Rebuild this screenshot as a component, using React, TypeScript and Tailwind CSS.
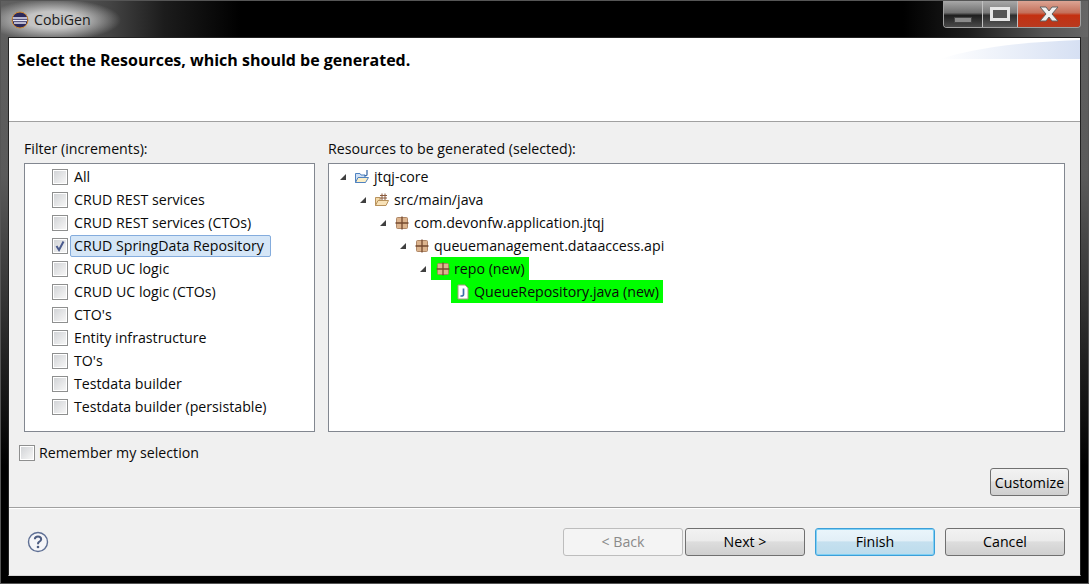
import React from 'react';

const font = { fontFamily: '"Open Sans", "Noto Sans", sans-serif' };

const filters = [
  'All',
  'CRUD REST services',
  'CRUD REST services (CTOs)',
  'CRUD SpringData Repository',
  'CRUD UC logic',
  'CRUD UC logic (CTOs)',
  "CTO's",
  'Entity infrastructure',
  "TO's",
  'Testdata builder',
  'Testdata builder (persistable)',
];

const Check: React.FC<{ checked?: boolean }> = ({ checked }) => (
  <span className="relative flex h-[16px] w-[16px] shrink-0 items-center justify-center border border-[#8e8f8f] bg-white">
    <span className="h-[12px] w-[12px] bg-gradient-to-br from-[#d2d4d7] to-[#f6f6f6]" />
    {checked && (
      <svg viewBox="0 0 16 16" className="absolute -left-px -top-px h-[16px] w-[16px]">
        <path d="M4.5 8 L7 12 L11.5 3.5" fill="none" stroke="#4a5a8c" strokeWidth="2" />
      </svg>
    )}
  </span>
);

const PackageIcon = () => (
  <svg viewBox="0 0 14 14" className="h-[14px] w-[14px] shrink-0">
    <rect x="1.5" y="1.5" width="11" height="11" rx="1" fill="#dcb48e" stroke="#a87e5c" strokeWidth="0.9" />
    <path d="M0.5 7H13.5M7 0.5V13.5" stroke="#74492f" strokeWidth="1.3" fill="none" />
  </svg>
);

const Arrow = () => (
  <svg viewBox="0 0 8 8" className="h-2 w-2 shrink-0">
    <path d="M7 1V7H1Z" fill="#404040" />
  </svg>
);

const ProjectIcon = () => (
  <svg viewBox="0 0 16 16" className="h-4 w-4 shrink-0">
    <path d="M1.5 4.5H6L7 6H11V13.5H1.5Z" fill="#cfe0f5" stroke="#4f82c0" />
    <path d="M1.5 13.5L4 8.5H14.5L11.5 13.5Z" fill="#fbeec6" stroke="#4f82c0" />
    <path d="M13 1V5.5Q13 7 10.5 6.5" fill="none" stroke="#3f6ea8" strokeWidth="1.3" />
  </svg>
);

const SourceIcon = () => (
  <svg viewBox="0 0 16 16" className="h-4 w-4 shrink-0">
    <path d="M1.5 5.5H6V13.5H1.5Z" fill="#f3d9a8" stroke="#b8925c" />
    <path d="M1.5 13.5L4 8.5H14.5L12 13.5Z" fill="#f8e2b8" stroke="#b8925c" />
    <path d="M6 3.5H13M6 6H13M8 1.5V8M11 1.5V8" stroke="#8a5a3c" fill="none" />
  </svg>
);

const JavaFileIcon = () => (
  <svg viewBox="0 0 14 16" className="h-4 w-[14px] shrink-0">
    <path d="M2 1H9L12 4V15H2Z" fill="#ffffff" stroke="#a89880" />
    <path d="M7.5 4.5V10.5Q7.5 12.5 4.5 11.8" fill="none" stroke="#3f6ea8" strokeWidth="1.7" />
  </svg>
);

const TreeRow: React.FC<{
  indent: string;
  gap: string;
  icon: React.ReactNode;
  label: string;
}> = ({ indent, gap, icon, label }) => (
  <div className={`flex h-[23px] items-center ${indent}`}>
    <Arrow />
    <span className={`flex h-[23px] items-center ${gap}`}>
      {icon}
      <span>{label}</span>
    </span>
  </div>
);

const WizardButton: React.FC<{ label: string; kind?: 'normal' | 'disabled' | 'focus'; className?: string }> = ({
  label,
  kind = 'normal',
  className = '',
}) => {
  const look =
    kind === 'disabled'
      ? 'border-[#bdbdbd] bg-[#f4f4f4] text-[#8a8a8a]'
      : kind === 'focus'
        ? 'border-[#3c9fd8] bg-[linear-gradient(#eaf5fb_0%,#e2eff7_45%,#c5e0ef_50%,#bcdcec_100%)] text-black shadow-[inset_0_0_0_1px_#7fd0f5]'
        : 'border-[#707070] bg-[linear-gradient(#f2f2f2_0%,#ebebeb_45%,#dddddd_50%,#cfcfcf_100%)] text-black';
  return (
    <button className={`h-[28px] w-[120px] rounded-[3px] border pt-[1px] text-[14.2px] ${look} ${className}`}>
      {label}
    </button>
  );
};

export default function App() {
  return (
    <div
      className="flex h-[584px] w-[1089px] flex-col overflow-hidden border border-[#555] bg-[linear-gradient(#606060_0%,#5a5a5a_30%,#000000_80%)] text-[14.2px] leading-[20px] text-[#0a0a0a]"
      style={font}
    >
      {/* title bar */}
      <div className="flex h-[36px] shrink-0 items-start justify-between bg-[radial-gradient(ellipse_68px_21px_at_52px_19px,#c4c4c4_40%,rgba(170,170,170,0)_100%),linear-gradient(90deg,#606060_0%,#5a5a5a_6%,#444444_10%,#1c1c1c_15%,#000000_22%,#000000_83%,#1c1c1c_89%,#555555_96%,#666666_100%)]">
        <div className="ml-[10px] mt-[9px] flex items-center gap-[5px]">
          <svg viewBox="0 0 18 18" className="h-[18px] w-[18px]">
            <circle cx="9" cy="9" r="8" fill="#2d2a5c" stroke="#d08a30" strokeWidth="1" />
            <path d="M2 7H16M2 9.5H16M3 12H15" stroke="#e6e6f5" strokeWidth="1.3" />
          </svg>
          <span className="text-[#1c1c1c]">CobiGen</span>
        </div>
        <div className="mr-[7px] flex h-[27px] w-[138px] overflow-hidden rounded-b-[4px] border border-t-0 border-[#a0a0a0]">
          <div className="flex w-[39px] items-end justify-center border-r border-[#c0c0c0] bg-[linear-gradient(#a8a8a8_0%,#707070_45%,#1e1e1e_55%,#4a4a4a_100%)] pb-[4px]">
            <span className="h-[6px] w-[18px] border border-[#444] bg-[#8a8a8a]" />
          </div>
          <div className="flex w-[35px] items-center justify-center border-r border-[#c0c0c0] bg-[linear-gradient(#a8a8a8_0%,#7a7a7a_45%,#2e2e2e_55%,#5a5a5a_100%)]">
            <span className="h-[14px] w-[20px] border-[3px] border-[#e6e6e6] bg-[#555]" />
          </div>
          <div className="flex flex-1 items-center justify-center bg-[linear-gradient(#dca494_0%,#c4705a_45%,#c43010_55%,#b83a20_100%)]">
            <svg viewBox="0 0 24 18" className="h-[18px] w-[24px]">
              <path d="M3 2H9L12 6L15 2H21L15 9L21 16H15L12 12L9 16H3L9 9Z" fill="#f0f0f0" stroke="#606060" />
            </svg>
          </div>
        </div>
      </div>

      {/* dialog */}
      <div className="mx-[7px] flex min-h-0 flex-1 flex-col border border-[#222] border-b-[#d8d8d8] bg-[#f0f0f0]">
        <div className="relative h-[84px] shrink-0 overflow-hidden border-b border-[#a0a0a0] bg-white pl-[8px] pt-[11px]">
          <h1 className="text-[16px] leading-[22px] font-bold text-black">Select the Resources, which should be generated.</h1>
          <svg viewBox="0 0 140 21" preserveAspectRatio="none" className="absolute right-0 top-0 h-[21px] w-[140px]">
            <defs>
              <linearGradient id="swoosh" x1="0" x2="1" y1="0" y2="0">
                <stop offset="0" stopColor="#ffffff" />
                <stop offset="1" stopColor="#d6e0f3" />
              </linearGradient>
            </defs>
            <path d="M0 21Q50 5 140 2V21Z" fill="url(#swoosh)" />
          </svg>
        </div>

        <div className="flex flex-1 flex-col">
          <div className="flex gap-[13px] pl-[15px] pr-[15px] pt-[17px]">
            <div className="flex w-[291px] flex-col">
              <div className="h-[24px] leading-[20px]">Filter (increments):</div>
              <div className="h-[269px] border border-[#828790] bg-white pl-[27px] pt-[1px]">
                {filters.map((f) => (
                  <div key={f} className="flex h-[23px] items-center gap-[2px]">
                    <Check checked={f === 'CRUD SpringData Repository'} />
                    <span
                      className={`h-[22px] rounded-[2px] border pl-[3px] leading-[20px] ${
                        f === 'CRUD SpringData Repository'
                          ? 'w-[201px] border-[#84acdd] bg-[#d5e6f7]'
                          : 'border-transparent'
                      }`}
                    >
                      {f}
                    </span>
                  </div>
                ))}
              </div>
            </div>
            <div className="flex flex-1 flex-col">
              <div className="h-[24px] leading-[20px]">Resources to be generated (selected):</div>
              <div className="h-[269px] border border-[#828790] bg-white pt-[1px]">
                <TreeRow indent="pl-[10px]" gap="ml-[7px] gap-[4px]" icon={<ProjectIcon />} label="jtqj-core" />
                <TreeRow indent="pl-[30px]" gap="ml-[7px] gap-[4px]" icon={<SourceIcon />} label="src/main/java" />
                <TreeRow
                  indent="pl-[50px]"
                  gap="ml-[8px] gap-[5px]"
                  icon={<PackageIcon />}
                  label="com.devonfw.application.jtqj"
                />
                <TreeRow
                  indent="pl-[70px]"
                  gap="ml-[8px] gap-[5px]"
                  icon={<PackageIcon />}
                  label="queuemanagement.dataaccess.api"
                />
                <div className="flex h-[23px] items-center pl-[90px]">
                  <Arrow />
                  <span className="ml-[4px] flex h-[23px] items-center gap-[4px] bg-[#00ff00] pl-[5px] pr-[4px]">
                    <PackageIcon />
                    <span>repo (new)</span>
                  </span>
                </div>
                <div className="flex h-[23px] items-center pl-[122px]">
                  <span className="flex h-[23px] items-center gap-[4px] bg-[#00ff00] pl-[5px] pr-[4px]">
                    <JavaFileIcon />
                    <span>QueueRepository.java (new)</span>
                  </span>
                </div>
              </div>
            </div>
          </div>

          <label className="ml-[10px] mt-[11px] flex h-[20px] items-center gap-[4px]">
            <Check />
            <span>Remember my selection</span>
          </label>

          <div className="mr-[11px] mt-[5px] flex justify-end">
            <button className="h-[28px] w-[79px] rounded-[3px] border border-[#707070] bg-[linear-gradient(#f2f2f2_0%,#ebebeb_45%,#dddddd_50%,#cfcfcf_100%)] pt-[1px] text-[14.2px] text-black">
              Customize
            </button>
          </div>
        </div>

        <div className="flex h-[68px] shrink-0 items-center justify-between border-t border-[#a0a0a0] pl-[18px] pr-[15px] shadow-[inset_0_1px_0_#fff]">
          <svg viewBox="0 0 22 22" className="h-[22px] w-[22px]">
            <circle cx="11" cy="11" r="9.5" fill="#f5f5f8" stroke="#5e6f94" strokeWidth="1.4" />
            <path d="M7.8 8.3Q8 5.5 11 5.5T14.2 8.3Q14.2 10 11.8 11.2Q11 11.7 11 13.2" fill="none" stroke="#4c5c80" strokeWidth="2" />
            <circle cx="11" cy="16" r="1.3" fill="#4c5c80" />
          </svg>
          <div className="flex">
            <WizardButton label="< Back" kind="disabled" />
            <WizardButton label="Next >" className="ml-[2px]" />
            <WizardButton label="Finish" kind="focus" className="ml-[10px]" />
            <WizardButton label="Cancel" className="ml-[10px]" />
          </div>
        </div>
      </div>
      <div className="h-[7px] shrink-0 bg-black" />
    </div>
  );
}
